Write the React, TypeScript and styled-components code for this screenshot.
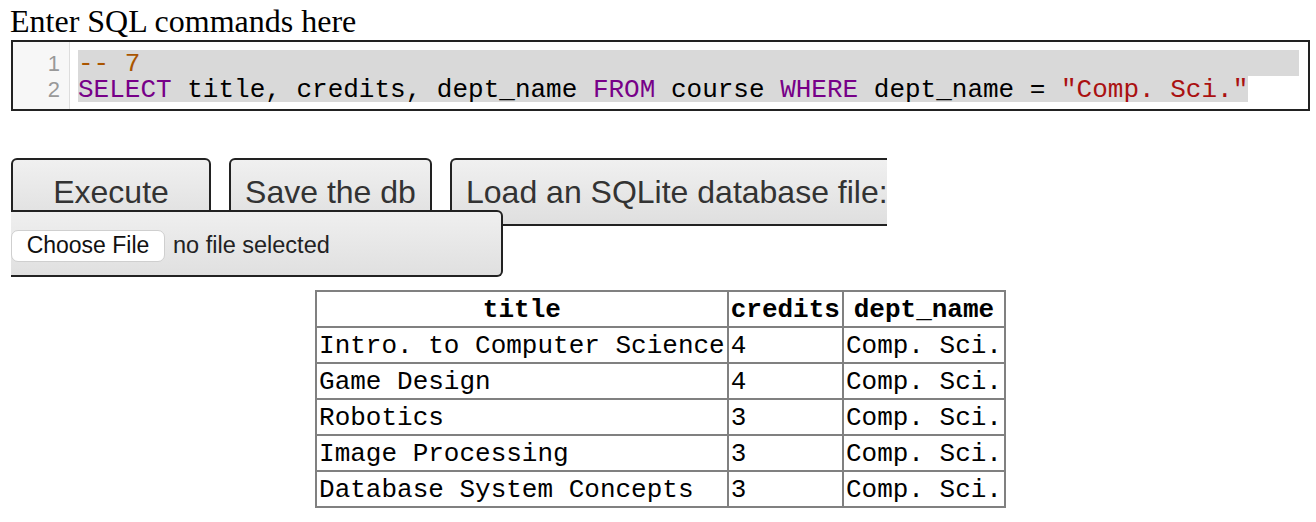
import React from "react";
import styled, { createGlobalStyle } from "styled-components";

const GlobalStyle = createGlobalStyle`
  html, body {
    margin: 0;
    padding: 0;
    background: #fff;
  }
  body {
    font-family: "Liberation Serif", "Times New Roman", serif;
    color: #000;
  }
`;

const rows = [
	{ title: "Intro. to Computer Science", credits: "4", dept: "Comp. Sci." },
	{ title: "Game Design", credits: "4", dept: "Comp. Sci." },
	{ title: "Robotics", credits: "3", dept: "Comp. Sci." },
	{ title: "Image Processing", credits: "3", dept: "Comp. Sci." },
	{ title: "Database System Concepts", credits: "3", dept: "Comp. Sci." },
];

export default function App() {
	return (
		<>
			<GlobalStyle />
			<Page>
				<Heading>Enter SQL commands here</Heading>
				<Editor>
					<Gutter>
						<LineNumber>1</LineNumber>
						<LineNumber>2</LineNumber>
					</Gutter>
					<Code>
						{/* selection runs past the end of line 1, and stops at the end of line 2 */}
						<Line $selection="full">
							<Comment>-- 7</Comment>
						</Line>
						<Line $selection="text">
							<Keyword>SELECT</Keyword> title, credits, dept_name <Keyword>FROM</Keyword> course{" "}
							<Keyword>WHERE</Keyword> dept_name = <Str>"Comp. Sci."</Str>
						</Line>
					</Code>
				</Editor>

				<Controls>
					<ButtonRow>
						<ActionButton $width={200}>Execute</ActionButton>
						<ActionButton $width={203}>Save the db</ActionButton>
						<LoadLabel>Load an SQLite database file:</LoadLabel>
					</ButtonRow>
					<FileBox>
						<ChooseFile type="button">Choose File</ChooseFile>
						<FileName>no file selected</FileName>
					</FileBox>
				</Controls>

				<Results>
					<thead>
						<tr>
							<Th>title</Th>
							<Th>credits</Th>
							<Th>dept_name</Th>
						</tr>
					</thead>
					<tbody>
						{rows.map(r => (
							<tr key={r.title}>
								<Td>{r.title}</Td>
								<Td>{r.credits}</Td>
								<Td>{r.dept}</Td>
							</tr>
						))}
					</tbody>
				</Results>
			</Page>
		</>
	);
}

const Page = styled.div`
	padding: 0 6px 0 11px;
`;

const Heading = styled.div`
	font-size: 32px;
	line-height: 36px;
	margin: 3px 0 0 -1px;
`;

const Editor = styled.div`
	margin-top: 1px;
	height: 71px;
	box-sizing: border-box;
	border: 2px solid #222;
	display: flex;
	background: #fff;
`;

const Gutter = styled.div`
	width: 57px;
	box-sizing: border-box;
	background: #f7f7f7;
	border-right: 1px solid #ddd;
	padding: 9px 9px 0 0;
	text-align: right;
	font-family: "Liberation Sans", Arial, sans-serif;
	font-size: 22px;
	color: #999;
`;

const LineNumber = styled.div`
	height: 26px;
	line-height: 26px;
`;

const Code = styled.div`
	flex: 1;
	padding: 8px 9px 0 8px;
	font-family: "Liberation Mono", "Courier New", monospace;
	font-size: 26px;
	white-space: pre;
`;

const Line = styled.div<{ $selection?: "full" | "text" }>`
	box-sizing: border-box;
	height: 26px;
	padding-top: 2px;
	line-height: 24px;
	width: ${({ $selection }) => ($selection === "text" ? "fit-content" : "auto")};
	background: ${({ $selection }) => ($selection ? "#d9d9d9" : "transparent")};
`;

const Keyword = styled.span`
	color: #770088;
`;

const Comment = styled.span`
	color: #aa5500;
`;

const Str = styled.span`
	color: #aa1111;
`;

const Controls = styled.div`
	margin-top: 47px;
	display: grid;
	grid-template-columns: max-content;
	grid-template-rows: 52px 16px 51px;
`;

const ButtonRow = styled.div`
	grid-row: 1 / 3;
	grid-column: 1;
	display: flex;
	gap: 18px;
`;

const buttonFace = `
	box-sizing: border-box;
	height: 68px;
	border: 2px solid #222;
	border-radius: 6px;
	background: linear-gradient(#f0f0f0, #dfdfdf);
	font-family: "Liberation Sans", Arial, sans-serif;
	font-size: 32px;
	color: #333;
	white-space: nowrap;
`;

const ActionButton = styled.button<{ $width: number }>`
	${buttonFace}
	width: ${({ $width }) => $width}px;
	padding: 0;
`;

const LoadLabel = styled.div`
	${buttonFace}
	width: 437px;
	border-right: none;
	border-radius: 6px 0 0 6px;
	overflow: hidden;
	display: flex;
	align-items: center;
	padding-left: 14px;
`;

const FileBox = styled.div`
	grid-row: 2 / 4;
	grid-column: 1;
	z-index: 1;
	width: 492px;
	box-sizing: border-box;
	border: 2px solid #222;
	border-left: none;
	border-radius: 0 6px 6px 0;
	background: linear-gradient(#efefef, #e0e0e0);
	display: flex;
	align-items: center;
	padding-top: 4px;
	font-family: "Liberation Sans", Arial, sans-serif;
	font-size: 23.5px;
	color: #222;
`;

const ChooseFile = styled.button`
	height: 32px;
	width: 154px;
	padding: 0;
	background: #fff;
	border: 1px solid #cfcfcf;
	border-radius: 7px;
	font: inherit;
	font-size: 23px;
	color: #111;
`;

const FileName = styled.span`
	margin-left: 8px;
`;

const Results = styled.table`
	margin: 13px auto 0;
	border-collapse: collapse;
	font-family: "Liberation Mono", "Courier New", monospace;
	font-size: 26px;
	line-height: 30px;
`;

const Th = styled.th`
	border: 2px solid #808080;
	padding: 3px 2px 1px;
	font-weight: bold;
	text-align: center;
`;

const Td = styled.td`
	border: 2px solid #808080;
	padding: 3px 2px 1px;
	text-align: left;
`;
